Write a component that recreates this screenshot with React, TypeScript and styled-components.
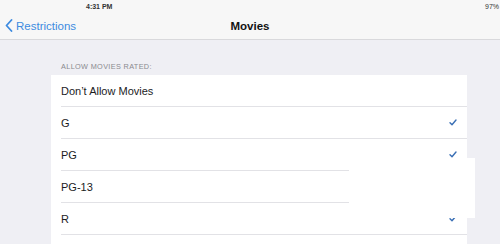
import React from 'react';
import styled, { createGlobalStyle } from 'styled-components';

const GlobalStyle = createGlobalStyle`
  body {
    margin: 0;
    background: #efeff4;
    font-family: 'Liberation Sans', Arial, sans-serif;
    overflow: hidden;
  }
`;

const ratings = [
  { label: 'Don\u2019t Allow Movies', checked: false },
  { label: 'G', checked: true },
  { label: 'PG', checked: true },
  { label: 'PG-13', checked: true },
  { label: 'R', checked: true },
  { label: '', checked: false },
];

const Screen = styled.div`
  position: relative;
  width: 500px;
  height: 244px;
  overflow: hidden;
  background: #efeff4;
`;

const StatusBar = styled.div`
  height: 13px;
  background: #f7f7f7;
  display: flex;
  align-items: center;
  justify-content: space-between;
  padding: 0 1px 0 86px;
  font-size: 7px;
  font-weight: bold;
  color: #333;
`;

const Battery = styled.span`
  font-weight: normal;
`;

const NavBar = styled.div`
  height: 25px;
  background: #f7f7f7;
  border-bottom: 1px solid #d9d9dc;
  display: grid;
  grid-template-columns: 1fr auto 1fr;
  align-items: center;
  padding: 0 5px 1px;
`;

const BackButton = styled.div`
  display: flex;
  align-items: center;
  gap: 3px;
  color: #3d8be0;
  font-size: 11.5px;
`;

const Title = styled.div`
  font-size: 11.5px;
  font-weight: bold;
  color: #111;
`;

const Content = styled.div`
  padding: 23px 33px 0 51px;
`;

const SectionHeader = styled.div`
  font-size: 7.3px;
  line-height: 8px;
  color: #8a8a8f;
  letter-spacing: 0.35px;
  padding-left: 10px;
  margin-bottom: 4px;
`;

const Card = styled.div`
  background: #fff;
`;

const Row = styled.div`
  height: 32px;
  margin-left: 10px;
  padding-right: 10px;
  border-bottom: 1px solid #e2e2e6;
  box-sizing: border-box;
  display: flex;
  align-items: center;
  justify-content: space-between;
  font-size: 11px;
  color: #1c1c1e;
`;

const Overlay = styled.div`
  position: absolute;
  left: 349px;
  top: 158px;
  width: 126px;
  height: 60px;
  background: #fff;
`;

const Check = () => (
  <svg width="8" height="7" viewBox="0 0 8 7">
    <path d="M1 3.8 L3 5.8 L7 1" fill="none" stroke="#3a6fb5" strokeWidth="1.4" strokeLinecap="round" strokeLinejoin="round" />
  </svg>
);

const App = () => {
  return (
    <>
      <GlobalStyle />
      <Screen>
        <StatusBar>
          <span>4:31 PM</span>
          <Battery>97%</Battery>
        </StatusBar>
        <NavBar>
          <BackButton>
            <svg width="8" height="13" viewBox="0 0 8 13">
              <path d="M6.5 1 L1.5 6.5 L6.5 12" fill="none" stroke="#3d8be0" strokeWidth="1.8" strokeLinecap="round" strokeLinejoin="round" />
            </svg>
            Restrictions
          </BackButton>
          <Title>Movies</Title>
          <div />
        </NavBar>
        <Content>
          <SectionHeader>ALLOW MOVIES RATED:</SectionHeader>
          <Card>
            {ratings.map((r, i) => (
              <Row key={i}>
                <span>{r.label}</span>
                {r.checked && <Check />}
              </Row>
            ))}
          </Card>
        </Content>
        <Overlay />
      </Screen>
    </>
  );
};

export default App;
